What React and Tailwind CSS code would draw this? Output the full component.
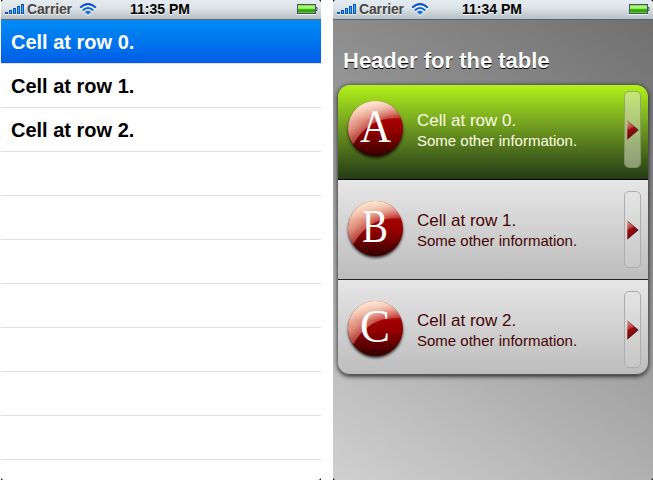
import React from 'react'

const FONT = "font-['Liberation_Sans',Arial,sans-serif]"

function Signal() {
  return (
    <svg width="20" height="12" viewBox="0 0 20 12" shapeRendering="crispEdges" className="block">
      {[
        [0, 2],
        [4, 4],
        [8, 6],
        [12, 8],
        [16, 10],
      ].map(([x, h]) => (
        <g key={x}>
          <rect x={x} y={10 - h} width="3" height={h} fill="#0c52bd" />
          {h > 2 && <rect x={x + 1} y={11 - h} width="1" height={h - 2} fill="#28b8fa" />}
          <rect x={x} y="10" width="3" height="1" fill="#fff" />
        </g>
      ))}
    </svg>
  )
}

function Wifi({ id }) {
  return (
    <svg width="18" height="13" viewBox="0 0 18 13" className="block">
      <defs>
        <linearGradient id={id} x1="0" y1="0" x2="0" y2="13" gradientUnits="userSpaceOnUse">
          <stop offset="0" stopColor="#0a4cc0" />
          <stop offset="1" stopColor="#1683ee" />
        </linearGradient>
      </defs>
      {[['#fff', 1], [`url(#${id})`, 0]].map(([c, dy]) => (
        <g key={dy} fill="none" stroke={c} strokeWidth="2.1" transform={`translate(0 ${dy})`}>
          <path d="M1.2 4.7Q9-2.5 16.8 4.7" />
          <path d="M3.8 7.4Q9 2.6 14.2 7.4" />
          <path d="M5.9 9Q9 6.3 12.1 9L9 12Z" fill={c} stroke="none" />
        </g>
      ))}
    </svg>
  )
}

function Battery({ id }) {
  return (
    <svg width="22" height="11" viewBox="0 0 22 11" className="block">
      <defs>
        <linearGradient id={id} x1="0" y1="0" x2="0" y2="1">
          <stop offset="0" stopColor="#6fd238" />
          <stop offset="0.22" stopColor="#b6ff7c" />
          <stop offset="0.48" stopColor="#8bea50" />
          <stop offset="0.56" stopColor="#3fb812" />
          <stop offset="0.75" stopColor="#2c9c0a" />
          <stop offset="1" stopColor="#65d52f" />
        </linearGradient>
      </defs>
      <rect x="0" y="1" width="19" height="10" fill="#fff" opacity=".7" />
      <rect x="0.5" y="0.5" width="18" height="9" fill="#e9f4e8" stroke="#4b4f72" />
      <rect x="1" y="1" width="17" height="8" fill={`url(#${id})`} />
      <path d="M19 3.5h1v3H19" fill="#d6dbe0" stroke="#4b4f72" />
    </svg>
  )
}

function StatusBar({ time, name }) {
  return (
    <div className="flex h-5 w-full shrink-0 items-start border-b border-[#5c636b] bg-linear-to-b from-[#e4ebf0] via-[#dee4e8] via-40% to-[#b7c0c5] text-[14px] leading-[18px] font-bold">
      <div className="flex w-[129px] shrink-0 items-start pl-1">
        <div className="pt-1"><Signal /></div>
        <span className="ml-[2px] w-[45px] tracking-[-0.15px] whitespace-nowrap text-[#464646] [text-shadow:0_1px_0_#eef2f4]">Carrier</span>
        <div className="ml-[7px] pt-[3px]"><Wifi id={name + 'wifi'} /></div>
      </div>
      <span className="grow whitespace-nowrap text-black [text-shadow:0_1px_0_#eef2f4]">{time}</span>
      <div className="pt-1 pr-[2px]"><Battery id={name + 'battery'} /></div>
    </div>
  )
}

function Corners() {
  return (
    <svg width="320" height="480" viewBox="0 0 320 480" className="pointer-events-none absolute inset-0 block">
      <path d="M0 0H2L0 2ZM320 0H318L320 2ZM0 480H2L0 478ZM320 480H318L320 478Z" fill="#222" />
    </svg>
  )
}

function PlainTable() {
  return (
    <section className="relative flex h-[480px] w-80 flex-col overflow-hidden bg-white">
      <StatusBar time="11:35 PM" name="plain" />
      <ul>
        {[0, 1, 2, 3, 4, 5, 6, 7, 8, 9].map((i) => (
          <li
            key={i}
            className={
              'flex h-11 items-center border-b border-[#e0e0e0] pl-[10px] text-[20px] leading-6 font-bold ' +
              (i === 0 ? 'bg-linear-to-b from-[#058cf5] to-[#015de6] bg-clip-padding text-white' : 'text-black')
            }
          >
            {i < 3 && <span>Cell at row {i}.</span>}
          </li>
        ))}
      </ul>
      <Corners />
    </section>
  )
}

const GLYPHS = {
  A: { x: 360, width: 31 },
  B: { x: 362, width: 26 },
  C: { x: 360, width: 30 },
}

function Orb({ letter }) {
  const id = 'orb' + letter
  const glyph = GLYPHS[letter]
  return (
    <svg width="65" height="69" viewBox="-5 -5 65 69" className="-m-[5px] block shrink-0">
      <defs>
        <linearGradient id={id} x1="0.5" y1="0" x2="0.5" y2="1">
          <stop offset="0.3" stopColor="#a80000" />
          <stop offset="0.55" stopColor="#930000" />
          <stop offset="1" stopColor="#360000" />
        </linearGradient>
        <linearGradient id={id + 'g'} x1="12" y1="0" x2="36" y2="32" gradientUnits="userSpaceOnUse">
          <stop offset="0" stopColor="#ffe4cc" />
          <stop offset="0.45" stopColor="#e8a590" stopOpacity=".85" />
          <stop offset="1" stopColor="#c83a3a" stopOpacity=".3" />
        </linearGradient>
        <linearGradient id={id + 't'} x1="0" y1="0" x2="0" y2="1">
          <stop offset="0" stopColor="#ffe9d4" stopOpacity=".95" />
          <stop offset="0.35" stopColor="#ffe0cc" stopOpacity="0" />
        </linearGradient>
        <clipPath id={id + 'c'}><circle cx="27.5" cy="27.5" r="27.5" /></clipPath>
        <filter id={id + 's'} x="-20%" y="-20%" width="140%" height="150%">
          <feGaussianBlur stdDeviation="1.5" />
        </filter>
      </defs>
      <circle cx="27.5" cy="29.5" r="27.2" fill="#000" opacity=".85" filter={`url(#${id}s)`} />
      <circle cx="27.5" cy="27.5" r="27.5" fill={`url(#${id})`} />
      <g clipPath={`url(#${id}c)`}>
        <path d="M0 0H55V17.5C34 15 17 23 5.5 43L0 40Z" fill={`url(#${id}g)`} />
        <rect width="55" height="55" fill={`url(#${id}t)`} />
      </g>
      <text
        x={glyph.x - 348}
        y="41"
        fill="#fff"
        fontSize="47"
        fontFamily="Liberation Serif, serif"
        textLength={glyph.width}
        lengthAdjust="spacingAndGlyphs"
      >
        {letter}
      </text>
    </svg>
  )
}

function Disclosure({ index, active }) {
  const id = 'arrow' + index
  return (
    <div
      className={
        'flex h-[77px] w-[17px] items-center rounded-[5px] border bg-clip-padding pl-[2px] ' +
        (active ? 'border-[#929f78]/80 bg-[#e6e8d8]/50' : 'border-[#adadad] bg-white/10')
      }
    >
      <svg width="12" height="20" viewBox="0 0 12 20" className="block">
        <defs>
          <linearGradient id={id} x1="0" y1="0" x2="0.25" y2="1">
            <stop offset="0" stopColor="#e9a29b" />
            <stop offset="0.42" stopColor="#ba4040" />
            <stop offset="0.5" stopColor="#980c10" />
            <stop offset="1" stopColor="#6d0709" />
          </linearGradient>
        </defs>
        <path d="M0.3 0.5L11.5 10L0.3 19.5Z" fill={`url(#${id})`} />
        <path d="M0.5 1L11.2 10L0.5 19" fill="none" stroke="#3d2020" strokeOpacity=".65" strokeWidth=".8" />
      </svg>
    </div>
  )
}

const ROWS = [
  { letter: 'A', box: 'h-[95px] rounded-t-[12px] border-b border-black bg-linear-to-b from-[#b2f318] to-[#263b14] pt-[6px] text-[#fbffe0]' },
  { letter: 'B', box: 'h-[100px] border-b border-[#222] bg-linear-to-b from-[#e6e6e6] to-[#bdbdbd] pt-[11px] text-[#460505]' },
  { letter: 'C', box: 'h-[95px] rounded-b-[12px] border-b border-[#555] bg-linear-to-b from-[#e6e6e6] to-[#bdbdbd] pt-[11px] text-[#460505]' },
]

function StyledTable() {
  return (
    <section className="relative flex h-[480px] w-80 flex-col overflow-hidden bg-[linear-gradient(214deg,#6d6d6d_0%,#989898_46%,#d0d0d0_100%)]">
      <StatusBar time="11:34 PM" name="styled" />
      <h1 className="h-[65px] pt-[27px] pl-[10px] text-[22px] leading-7 font-bold whitespace-nowrap text-white [text-shadow:0_1px_0_#000]">
        Header for the table
      </h1>
      <ul className="mx-[5px] rounded-[12px] shadow-[0_1px_5px_0_rgba(0,0,0,0.9)]">
        {ROWS.map((row, i) => (
          <li key={row.letter} className={'flex items-start pl-[10px] pr-[7px] ' + row.box}>
            <div className="pt-[10px]"><Orb letter={row.letter} /></div>
            <div className="ml-[14px] grow pt-[20px] whitespace-nowrap">
              <p className="text-[17px] leading-5">Cell at row {i}.</p>
              <p className="text-[15px] leading-5">Some other information.</p>
            </div>
            <Disclosure index={i} active={i === 0} />
          </li>
        ))}
      </ul>
      <Corners />
    </section>
  )
}

export default function App() {
  return (
    <main className={'flex h-[481px] w-[653px] justify-between overflow-hidden bg-white pl-px ' + FONT}>
      <PlainTable />
      <StyledTable />
    </main>
  )
}
